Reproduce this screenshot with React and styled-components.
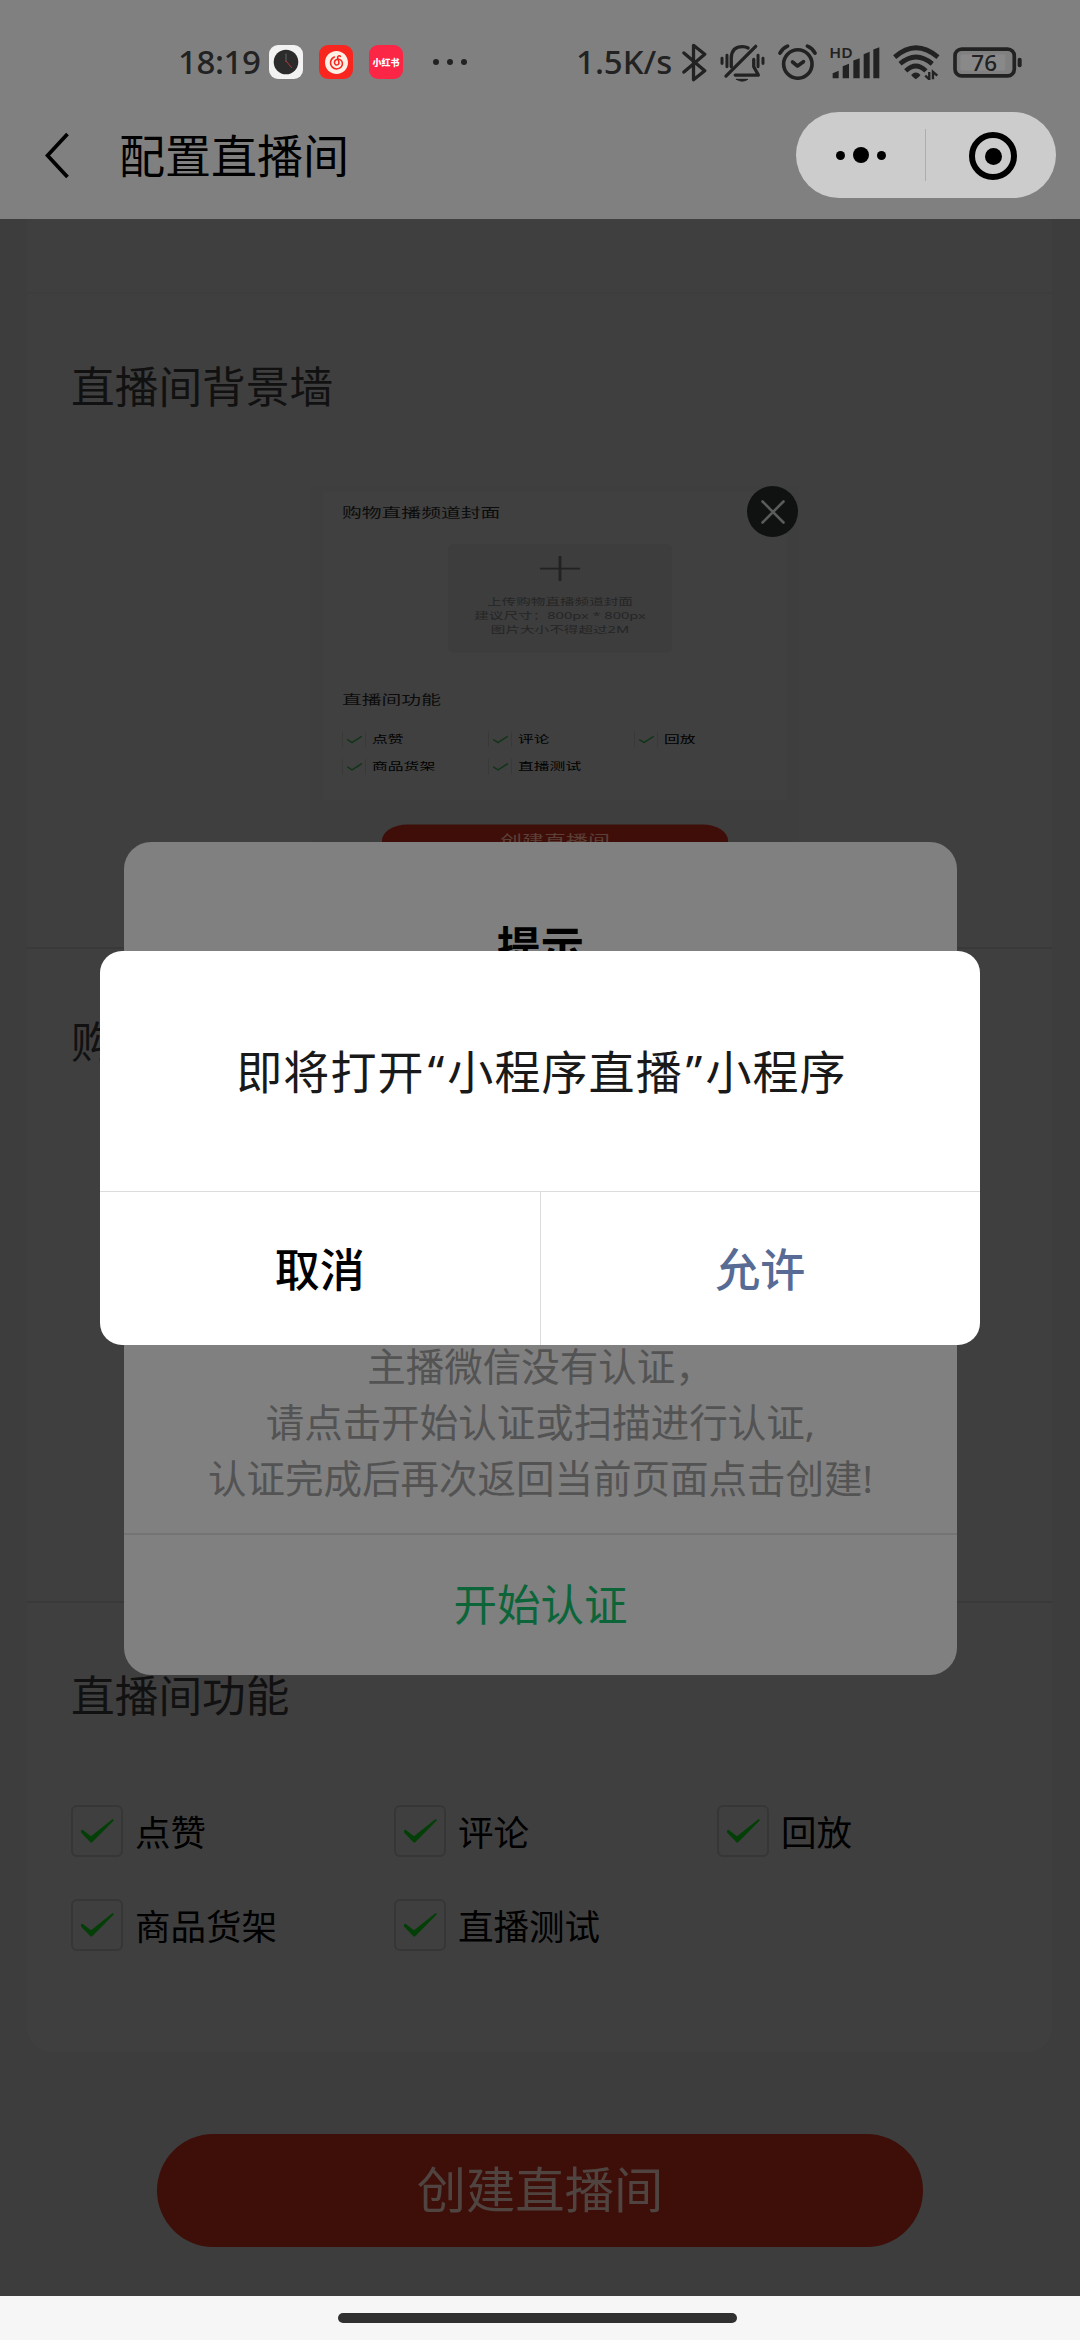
import React from "react";
import styled, { createGlobalStyle } from "styled-components";
import { SiNeteasecloudmusic } from "react-icons/si";

const features = ["点赞", "评论", "回放", "商品货架", "直播测试"];

const CheckIcon = () => (
  <svg width="33" height="24" viewBox="0 0 33 24">
    <path d="M0 11.2 L1.5 10.8 L10 17.2 L31.6 0 L33 1.2 L11 23.4 L9.6 23.4 L0 13.6 Z" fill="#043f08" />
  </svg>
);

const BluetoothIcon = () => (
  <svg width="25" height="39" viewBox="0 0 74 118" fill="none" stroke="#222" strokeWidth="10" strokeLinejoin="round" strokeLinecap="round">
    <path d="M5 30 L68 84 L34 111 V7 L68 34 L5 88" />
  </svg>
);

const MuteIcon = () => (
  <svg width="45" height="39" viewBox="0 0 136 118" fill="none" stroke="#222" strokeWidth="10" strokeLinecap="round" strokeLinejoin="round">
    <path d="M6 46 V62 M21 37 V72 M115 37 V72 M130 46 V62" strokeWidth="9" />
    <path d="M108 10 L18 100" />
    <path d="M34 72 V44 Q36 11 68 11 Q78 11 85 15" />
    <path d="M102 50 V72 L116 97 H46" />
    <path d="M50 110 H84 Q67 121 50 110 Z" fill="#222" strokeWidth="3" />
  </svg>
);

const AlarmIcon = () => (
  <svg width="39" height="36" viewBox="0 0 118 108" fill="none" stroke="#222" strokeWidth="11" strokeLinecap="round" strokeLinejoin="round">
    <circle cx="60" cy="60" r="43" />
    <path d="M6 27 Q14 12 29 6 M112 27 Q104 12 89 6" />
    <path d="M44 54 L59 66 L77 53" />
  </svg>
);

const SignalIcon = () => (
  <svg width="50" height="33" viewBox="0 0 150 98" fill="#222" overflow="visible">
    <text x="-2" y="34" fontFamily="Noto Sans" fontSize="42" fontWeight="600" textLength="70" lengthAdjust="spacingAndGlyphs">HD</text>
    <path d="M8 81 L26 74 V96 H8 Z M38 60 L57 53 V96 H38 Z M70 43 L89 36 V96 H70 Z M101 24 L119 17 V96 H101 Z M130 10 L148 3 V96 H130 Z" />
  </svg>
);

const WifiIcon = () => (
  <svg width="47" height="35" viewBox="0 0 140 104" fill="none" stroke="#222" strokeWidth="14" strokeLinecap="butt">
    <path d="M5 36 Q68 -20 134 36" />
    <path d="M21 56 Q68 15 117 56" />
    <path d="M38 77 Q68 48 98 77" />
    <path d="M54 89 Q68 75 82 89 Q76 97 68 102 Q60 97 54 89 Z" fill="#222" stroke="none" />
    <path d="M108 80 V102 L96 91 M119 102 V80 L132 91" strokeWidth="7" />
  </svg>
);

const BatteryIcon = () => (
  <svg width="69" height="31" viewBox="0 0 206 92">
    <rect x="22" y="22" width="134" height="48" rx="6" fill="#898989" />
    <rect x="6" y="6" width="177" height="80" rx="20" fill="none" stroke="#222" strokeWidth="11" />
    <rect x="193" y="32" width="12" height="28" rx="6" fill="#222" />
    <text x="93" y="70" fontFamily="Noto Sans" fontSize="67" textAnchor="middle" fill="#222" fontWeight="500">76</text>
  </svg>
);

const FeatureList = () => (
  <Features>
    {features.map((name) => (
      <Feature key={name}>
        <CheckBox>
          <CheckIcon />
        </CheckBox>
        <FeatureName>{name}</FeatureName>
      </Feature>
    ))}
  </Features>
);

const CoverPreview = () => (
  <Preview>
    <PreviewImage>
      <PreviewCard>
        <PreviewHeading>购物直播频道封面</PreviewHeading>
        <PreviewUpload>
          <svg width="40" height="40" viewBox="0 0 40 40">
            <path d="M0 20 H40 M20 0 V40" stroke="#222" strokeWidth="2.8" />
          </svg>
          <PreviewHint>
            上传购物直播频道封面
            <br />
            建议尺寸：800px * 800px
            <br />
            图片大小不得超过2M
          </PreviewHint>
        </PreviewUpload>
        <PreviewHeading>直播间功能</PreviewHeading>
        <PreviewFeatures>
          {features.map((name) => (
            <PreviewFeature key={name}>
              <PreviewBox>
                <svg width="15" height="15" viewBox="0 0 15 15" fill="none">
                  <path d="M0 7 L5 12 L15 2" stroke="#12351a" strokeWidth="2" />
                </svg>
              </PreviewBox>
              {name}
            </PreviewFeature>
          ))}
        </PreviewFeatures>
      </PreviewCard>
      <PreviewButton>创建直播间</PreviewButton>
    </PreviewImage>
    <RemoveButton>
      <svg width="24" height="24" viewBox="0 0 24 24">
        <path d="M1.5 1.5 L22.5 22.5 M22.5 1.5 L1.5 22.5" stroke="#5a5b5a" strokeWidth="2.6" strokeLinecap="round" />
      </svg>
    </RemoveButton>
  </Preview>
);

const App = () => {
  return (
    <Screen>
      <GlobalStyle />
      <Viewport>
        <StatusBar>
          <Time>18:19</Time>
          <AppIcons>
            <AppIcon $bg="#f2f2f2">
              <svg width="26" height="26" viewBox="0 0 26 26">
                <circle cx="13" cy="13" r="12.3" fill="#2b2b2b" />
                <path d="M13 13 V4.5" stroke="#555" strokeWidth="1.4" />
                <path d="M13 12 L19 19" stroke="#b03a3a" strokeWidth="1" />
              </svg>
            </AppIcon>
            <AppIcon $bg="#f9251f">
              <SiNeteasecloudmusic size={23} color="#fff0e6" />
            </AppIcon>
            <AppIcon $bg="#fb2545">小红书</AppIcon>
          </AppIcons>
          <MoreDots>
            <Dot $size={6} $color="#222" />
            <Dot $size={6} $color="#222" />
            <Dot $size={6} $color="#222" />
          </MoreDots>
          <Speed>1.5K/s</Speed>
          <StatusIcons>
            <BluetoothIcon />
            <MuteIcon />
            <AlarmIcon />
            <SignalIcon />
            <WifiIcon />
            <BatteryIcon />
          </StatusIcons>
        </StatusBar>
        <NavBar>
          <svg width="24" height="48" viewBox="0 0 24 48" fill="none">
            <path d="M22.5 2 L2.5 23.5 L22.5 45" stroke="#000" strokeWidth="3.8" />
          </svg>
          <Title>配置直播间</Title>
          <Capsule>
            <CapsuleMenu>
              <Dot $size={9} $color="#000" />
              <Dot $size={16} $color="#000" />
              <Dot $size={9} $color="#000" />
            </CapsuleMenu>
            <CapsuleClose>
              <Ring>
                <Dot $size={17} $color="#000" />
              </Ring>
            </CapsuleClose>
          </Capsule>
        </NavBar>
        <Page>
          <Card>
            <Section $height={75} $line="#3d3d3d" />
            <Section $height={655} $line="#393939">
              <Heading>直播间背景墙</Heading>
              <CoverPreview />
            </Section>
            <Section $height={654} $line="#393939">
              <Heading>购物直播频道封面</Heading>
            </Section>
            <Section $height={449}>
              <Heading>直播间功能</Heading>
              <FeatureList />
            </Section>
          </Card>
          <CreateButton>创建直播间</CreateButton>
          <PageMask>
            <AuthModal>
              <AuthTitle>提示</AuthTitle>
              <AuthText>
                主播微信没有认证，
                <br />
                请点击开始认证或扫描进行认证,
                <br />
                认证完成后再次返回当前页面点击创建!
              </AuthText>
              <AuthButton>开始认证</AuthButton>
            </AuthModal>
          </PageMask>
        </Page>
        <DialogMask>
          <Dialog>
            <Message>
              即将打开<Quote>“</Quote>小程序直播<Quote>”</Quote>小程序
            </Message>
            <Actions>
              <Action $color="#000">取消</Action>
              <Action $color="#576b95">允许</Action>
            </Actions>
          </Dialog>
        </DialogMask>
      </Viewport>
      <HomeBar>
        <HomeIndicator />
      </HomeBar>
    </Screen>
  );
};

export default App;

const GlobalStyle = createGlobalStyle`
  * {
    box-sizing: border-box;
  }
  body {
    margin: 0;
    font-family: "Noto Sans", "Noto Sans CJK SC", sans-serif;
  }
  svg {
    display: block;
    flex-shrink: 0;
  }
`;
const Screen = styled.div`
  width: 1080px;
  height: 2340px;
  overflow: hidden;
`;
const Viewport = styled.div`
  position: relative;
  height: 2296px;
  display: flex;
  flex-direction: column;
`;

/* status bar */
const StatusBar = styled.div`
  display: flex;
  align-items: center;
  height: 93px;
  padding: 31px 0 0 178px;
  background-color: #808080;
  color: #222;
`;
const Time = styled.span`
  width: 91px;
  font-size: 33px;
  font-weight: 500;
  line-height: 40px;
  letter-spacing: -0.4px;
`;
const AppIcons = styled.div`
  display: flex;
  gap: 16px;
`;
const AppIcon = styled.div`
  display: flex;
  align-items: center;
  justify-content: center;
  width: 34px;
  height: 34px;
  border-radius: 9px;
  background-color: ${(p) => p.$bg};
  color: #fff;
  font-size: 9px;
  font-weight: 900;
  white-space: nowrap;
`;
const Dot = styled.span`
  width: ${(p) => p.$size}px;
  height: ${(p) => p.$size}px;
  border-radius: 50%;
  background-color: ${(p) => p.$color};
`;
const MoreDots = styled.div`
  display: flex;
  gap: 8px;
  width: 143px;
  margin-left: 30px;
`;
const Speed = styled.span`
  width: 106px;
  font-size: 33px;
  font-weight: 500;
  line-height: 40px;
  white-space: nowrap;
`;
const StatusIcons = styled.div`
  display: flex;
  align-items: center;
  gap: 13px;
`;

/* navigation */
const NavBar = styled.div`
  display: flex;
  align-items: center;
  height: 126px;
  padding: 0 24px 0 45px;
  background-color: #808080;
`;
const Title = styled.h1`
  margin: 0 auto 0 50px;
  padding-bottom: 3px;
  font-size: 46px;
  font-weight: 400;
  line-height: 60px;
`;
const Capsule = styled.div`
  display: flex;
  align-items: center;
  width: 260px;
  height: 86px;
  margin-bottom: 2px;
  border-radius: 43px;
  background-color: #ccc;
`;
const CapsuleMenu = styled.div`
  display: flex;
  align-items: center;
  justify-content: center;
  gap: 8px;
  width: 130px;
  height: 52px;
  border-right: 1px solid #adadad;
`;
const CapsuleClose = styled.div`
  display: flex;
  justify-content: center;
  flex: 1;
`;
const Ring = styled.div`
  display: flex;
  align-items: center;
  justify-content: center;
  width: 48px;
  height: 48px;
  margin: 2px 0 0 4px;
  border: 6px solid #000;
  border-radius: 50%;
`;

/* page behind the dialogs */
const Page = styled.div`
  position: relative;
  flex: 1;
  background-color: #3d3d3d;
`;
const Card = styled.div`
  width: 1025px;
  margin-left: 27px;
  border-radius: 0 0 24px 24px;
  background-color: #3f3f3f;
`;
const Section = styled.div`
  height: ${(p) => p.$height}px;
  padding: ${(p) => (p.$height > 100 ? "62px 0 0 44px" : 0)};
  border-bottom: ${(p) => (p.$line ? `2px solid ${p.$line}` : "none")};
`;
const Heading = styled.h2`
  margin: 0;
  font-size: 43.7px;
  font-weight: 400;
  line-height: 60px;
  color: #111;
`;
const Features = styled.div`
  display: grid;
  grid-template-columns: repeat(3, 323px);
  row-gap: 42px;
  margin-top: 80px;
`;
const Feature = styled.div`
  display: flex;
  align-items: center;
  gap: 12px;
  height: 52px;
`;
const FeatureName = styled.span`
  padding-top: 2px;
  font-size: 35.5px;
  line-height: 50px;
  color: #000;
`;
const CheckBox = styled.span`
  display: flex;
  align-items: center;
  justify-content: center;
  width: 52px;
  height: 52px;
  border: 2px solid #363636;
  border-radius: 6px;
`;
const CreateButton = styled.button`
  display: block;
  width: 766px;
  height: 113px;
  margin: 82px auto 0;
  padding: 0 0 9px;
  border: none;
  border-radius: 57px;
  background-color: #3e0e09;
  color: #504440;
  font-family: inherit;
  font-size: 49.3px;
`;

/* uploaded background, squashed vertically */
const Preview = styled.div`
  position: relative;
  width: 488px;
  height: 375px;
  margin: 70px 0 0 240px;
`;
const PreviewImage = styled.div`
  height: 590px;
  padding: 8px 12px 0;
  background-color: #3e3e3e;
  transform: scaleY(0.635);
  transform-origin: top;
`;
const PreviewCard = styled.div`
  height: 487px;
  padding: 20px 0 0 19px;
  background-color: #404040;
`;
const PreviewHeading = styled.div`
  font-size: 19.8px;
  line-height: 28px;
  color: #0c0c0c;
`;
const PreviewUpload = styled.div`
  display: flex;
  flex-direction: column;
  align-items: center;
  width: 224px;
  height: 172px;
  margin: 35px 0 60px 106px;
  padding-top: 19px;
  border-radius: 8px;
  background-color: #3d3d3d;
`;
const PreviewHint = styled.div`
  margin-top: 22px;
  font-size: 14.6px;
  line-height: 21.6px;
  text-align: center;
  white-space: nowrap;
  color: #252525;
`;
const PreviewFeatures = styled.div`
  display: grid;
  grid-template-columns: repeat(3, 146px);
  row-gap: 19px;
  margin-top: 36px;
`;
const PreviewFeature = styled.div`
  display: flex;
  align-items: center;
  gap: 6px;
  height: 24px;
  font-size: 15.8px;
  line-height: 24px;
  color: #000;
`;
const PreviewBox = styled.span`
  display: flex;
  align-items: center;
  justify-content: center;
  width: 24px;
  height: 24px;
  border: solid #383a38;
  border-width: 0 1px;
`;
const PreviewButton = styled.div`
  width: 346px;
  height: 51px;
  margin: 38px auto 0;
  border-radius: 26px;
  background-color: #3f0e09;
  color: #5a4038;
  font-size: 22px;
  line-height: 47px;
  text-align: center;
`;
const RemoveButton = styled.div`
  position: absolute;
  top: 0;
  right: 1px;
  display: flex;
  align-items: center;
  justify-content: center;
  width: 51px;
  height: 51px;
  border-radius: 50%;
  background-color: #0f1211;
`;

/* auth modal */
const PageMask = styled.div`
  position: absolute;
  inset: 2px 0 0 1px;
  display: flex;
  align-items: center;
  justify-content: center;
`;
const AuthModal = styled.div`
  display: flex;
  flex-direction: column;
  justify-content: flex-end;
  width: 833px;
  height: 833px;
  border-radius: 27px;
  background-color: #808080;
  text-align: center;
`;
const AuthTitle = styled.div`
  margin: 0 0 auto;
  padding-top: 74px;
  font-size: 43.5px;
  font-weight: 700;
  line-height: 60px;
`;
const AuthText = styled.div`
  padding-bottom: 27px;
  font-size: 38.5px;
  line-height: 56px;
  color: #535353;
`;
const AuthButton = styled.div`
  height: 142px;
  border-top: 2px solid #747474;
  font-size: 43.5px;
  line-height: 138px;
  color: #0c6539;
`;

/* system dialog */
const DialogMask = styled.div`
  position: absolute;
  inset: 0;
  display: flex;
  align-items: center;
  justify-content: center;
`;
const Dialog = styled.div`
  width: 880px;
  height: 394px;
  overflow: hidden;
  border-radius: 22px;
  background-color: #fff;
`;
const Message = styled.div`
  height: 240px;
  padding-left: 3px;
  font-size: 46px;
  letter-spacing: 1.1px;
  line-height: 240px;
  text-align: center;
  color: #191919;
`;
const Quote = styled.span`
  padding: 0 2px 0 3px;
`;
const Actions = styled.div`
  display: flex;
  height: 154px;
  border-top: 1px solid #dcdcdc;
`;
const Action = styled.div`
  flex: 1;
  font-size: 45px;
  font-weight: 500;
  line-height: 155px;
  text-align: center;
  color: ${(p) => p.$color};
  & + & {
    border-left: 1px solid #dcdcdc;
  }
`;

const HomeBar = styled.div`
  display: flex;
  justify-content: center;
  height: 44px;
  padding-top: 17px;
  background-color: #f6f6f6;
`;
const HomeIndicator = styled.div`
  width: 399px;
  height: 10px;
  margin-right: 6px;
  border-radius: 5px;
  background-color: #303030;
`;
